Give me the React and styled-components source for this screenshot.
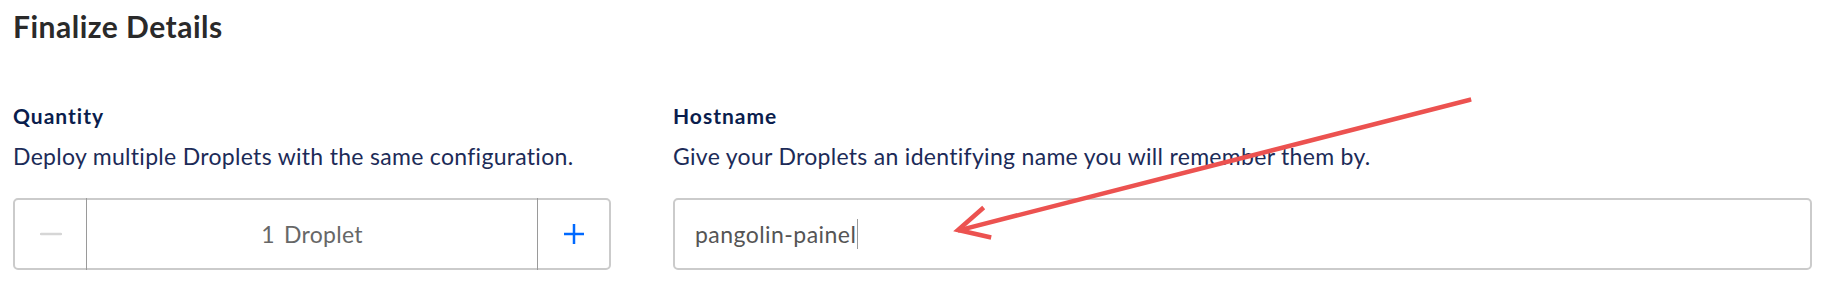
import React from 'react';
import styled, { createGlobalStyle } from 'styled-components';

const GlobalStyle = createGlobalStyle`
  html, body {
    margin: 0;
    padding: 0;
    background: #ffffff;
  }
  body {
    font-family: 'Lato', 'Liberation Sans', sans-serif;
  }
`;

const Page = styled.div`
  position: relative;
  box-sizing: border-box;
  width: 1831px;
  height: 306px;
  padding: 8px 19px 0 13px;
`;

const Title = styled.h2`
  margin: 0;
  font-size: 30px;
  line-height: 36px;
  font-weight: 700;
  letter-spacing: 0.5px;
  color: #2a2a2a;
`;

const Columns = styled.div`
  display: grid;
  grid-template-columns: 598px 1fr;
  column-gap: 62px;
  margin-top: 60px;
`;

const Field = styled.div`
  display: flex;
  flex-direction: column;
`;

const Label = styled.div`
  font-size: 21px;
  line-height: 24px;
  font-weight: 700;
  letter-spacing: 1px;
  color: #0a1d4d;
`;

const Description = styled.p`
  margin: 15px 0 28px;
  font-size: 23px;
  line-height: 27px;
  letter-spacing: 0.3px;
  color: #1c2b58;
`;

const Stepper = styled.div`
  display: flex;
  box-sizing: border-box;
  height: 72px;
  border: 2px solid #cbcbcb;
  border-radius: 5px;
`;

const StepButton = styled.button`
  flex: 0 0 ${(p) => p.$w}px;
  display: flex;
  align-items: center;
  justify-content: center;
  padding: 0;
  border: none;
  background: transparent;
  cursor: pointer;
`;

const Count = styled.div`
  flex: 1;
  display: flex;
  align-items: center;
  justify-content: center;
  margin: -2px 0;
  border-left: 1px solid #9a9a9a;
  border-right: 1px solid #9a9a9a;
  font-size: 23px;
  line-height: 27px;
  letter-spacing: 0.3px;
  color: #676767;
  word-spacing: 3px;
`;

const TextBox = styled.div`
  display: flex;
  align-items: center;
  box-sizing: border-box;
  height: 72px;
  padding-left: 20px;
  border: 2px solid #cbcbcb;
  border-radius: 5px;
  font-size: 23px;
  line-height: 27px;
  letter-spacing: 0.45px;
  color: #555555;
`;

const Caret = styled.span`
  display: inline-block;
  width: 1px;
  height: 30px;
  margin-left: 1px;
  background: #9a9a9a;
`;

const Overlay = styled.svg`
  position: absolute;
  left: 0;
  top: 0;
  pointer-events: none;
`;

function MinusIcon() {
  return (
    <svg width="22" height="22" viewBox="0 0 22 22">
      <line x1="1" y1="11" x2="21" y2="11" stroke="#d6d6d6" strokeWidth="2.5" strokeLinecap="round" />
    </svg>
  );
}

function PlusIcon() {
  return (
    <svg width="22" height="22" viewBox="0 0 22 22">
      <line x1="1" y1="11" x2="21" y2="11" stroke="#0069ff" strokeWidth="2.5" />
      <line x1="11" y1="1" x2="11" y2="21" stroke="#0069ff" strokeWidth="2.5" />
    </svg>
  );
}

export default function App() {
  return (
    <>
      <GlobalStyle />
      <Page>
        <Title>Finalize Details</Title>
        <Columns>
          <Field>
            <Label>Quantity</Label>
            <Description>Deploy multiple Droplets with the same configuration.</Description>
            <Stepper>
              <StepButton $w={71} aria-label="decrease">
                <MinusIcon />
              </StepButton>
              <Count>1 Droplet</Count>
              <StepButton $w={71} aria-label="increase">
                <PlusIcon />
              </StepButton>
            </Stepper>
          </Field>
          <Field>
            <Label>Hostname</Label>
            <Description>Give your Droplets an identifying name you will remember them by.</Description>
            <TextBox>
              pangolin-painel
              <Caret />
            </TextBox>
          </Field>
        </Columns>
        <Overlay width="1831" height="306" viewBox="0 0 1831 306">
          <g stroke="#ec5250" strokeWidth="4.5" fill="none" strokeLinecap="square">
            <line x1="1469" y1="100" x2="960" y2="230" />
            <polyline points="982,209 958,230 989,237" strokeLinejoin="miter" />
          </g>
        </Overlay>
      </Page>
    </>
  );
}
